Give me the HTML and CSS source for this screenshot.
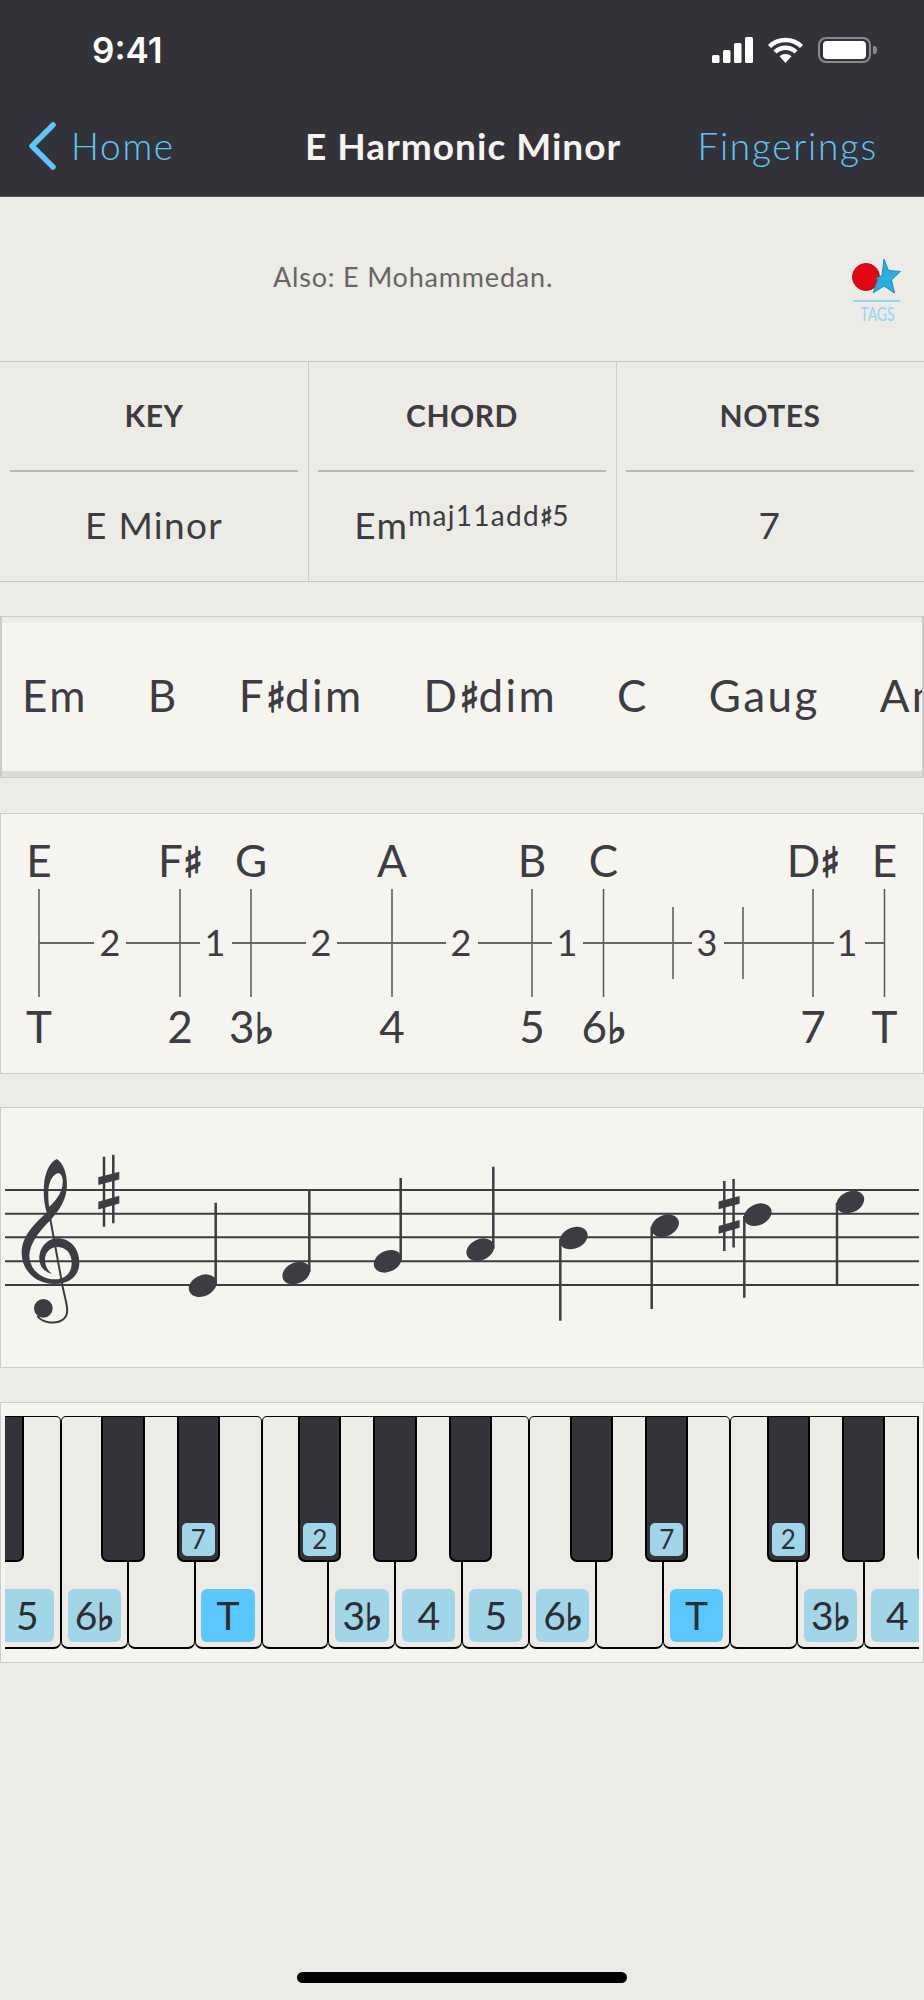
FILE: index.html
```html
<!DOCTYPE html>
<html lang="en">
<head>
  <meta charset="UTF-8">
  <title>E Harmonic Minor</title>
  <link rel="stylesheet" href="styles.css">
</head>
<body>
  <header class="topbar">
    <div class="status">
      <span class="time">9:41</span>
      <div class="status-icons">
        <svg width="42" height="26" viewBox="0 0 42 26">
          <rect class="bar" x="0" y="18" width="7.5" height="8" rx="1.5"/>
          <rect class="bar" x="11" y="13" width="7.5" height="13" rx="1.5"/>
          <rect class="bar" x="22" y="6" width="7.5" height="20" rx="1.5"/>
          <rect class="bar" x="33" y="0" width="8" height="26" rx="1.5"/>
        </svg>
        <svg class="wifi" width="37" height="26" viewBox="0 0 37 26">
          <path d="M2.5 9.5a23 23 0 0 1 32 0M8 15a15 15 0 0 1 21 0"/>
          <path class="wifi-dot" d="M18.500 26l-6-6.800a9 9 0 0 1 12 0z"/>
        </svg>
        <div class="battery"><div class="battery-fill"></div></div>
        <div class="battery-nub"></div>
      </div>
    </div>
    <nav class="navbar">
      <a class="back" href="#">
        <svg width="28" height="48" viewBox="0 0 28 48"><path d="M25 3L4 24l21 21"/></svg>
        Home
      </a>
      <h1>E Harmonic Minor</h1>
      <a class="fingerings" href="#">Fingerings</a>
    </nav>
  </header>

  <section class="alias">
    <p>Also: E Mohammedan.</p>
    <a class="tags" href="#">
      <svg width="50" height="36" viewBox="0 0 50 36">
        <circle class="tag-dot" cx="15" cy="19" r="13.500"/>
        <path class="tag-star" d="M33 1l4.500 11.500 12 1-9 8.500 3 13-10.500-7-11 7 5-13.500-2-1 6-3z"/>
      </svg>
      <span class="tags-label"><span>TAGS</span></span>
    </a>
  </section>

  <section class="facts">
    <div class="fact">
      <h2>KEY</h2>
      <p>E Minor</p>
    </div>
    <div class="fact">
      <h2>CHORD</h2>
      <p>Em<sup>maj11add<span class="acc">♯</span>5</sup></p>
    </div>
    <div class="fact">
      <h2>NOTES</h2>
      <p>7</p>
    </div>
  </section>

  <section class="chords">
    <span>Em</span>
    <span>B</span>
    <span>F<span class="acc">♯</span>dim</span>
    <span>D<span class="acc">♯</span>dim</span>
    <span>C</span>
    <span>Gaug</span>
    <span>Am</span>
  </section>

  <section class="panel panel-scale">
    <svg class="diagram" width="922" height="258" viewBox="1 814 922 258">
      <g class="note-names">
        <text x="39" y="877">E</text>
        <text x="180" y="877">F<tspan class="acc">♯</tspan></text>
        <text x="251" y="877">G</text>
        <text x="392" y="877">A</text>
        <text x="532" y="877">B</text>
        <text x="603.500" y="877">C</text>
        <text x="813" y="877">D<tspan class="acc">♯</tspan></text>
        <text x="884.500" y="877">E</text>
      </g>
      <g class="ticks">
        <path d="M39 889v108M180 889v108M251 889v108M392 889v108M532 889v108M603.500 889v108M813 889v108M884.500 889v108"/>
        <path d="M673 907v72M743 907v72"/>
      </g>
      <path class="steps" d="M39 943h55M126 943h74M232 943h74M337 943h109M478 943h74M583 943h109M724 943h110M865 943h19.500"/>
      <g class="step-sizes">
        <text x="110" y="956">2</text>
        <text x="215" y="956">1</text>
        <text x="321" y="956">2</text>
        <text x="461" y="956">2</text>
        <text x="567" y="956">1</text>
        <text x="707" y="956">3</text>
        <text x="847" y="956">1</text>
      </g>
      <g class="note-names">
        <text x="39" y="1043">T</text>
        <text x="180" y="1043">2</text>
        <text x="251" y="1043">3<tspan class="acc">♭</tspan></text>
        <text x="392" y="1043">4</text>
        <text x="532" y="1043">5</text>
        <text x="603.500" y="1043">6<tspan class="acc">♭</tspan></text>
        <text x="813" y="1043">7</text>
        <text x="884.500" y="1043">T</text>
      </g>
    </svg>
  </section>

  <section class="panel">
    <svg class="staff" width="922" height="258" viewBox="1 1108 922 258">
      <defs>
        <g id="sharp">
          <path class="stem" d="M104 1156.700v70M113.300 1154.700v68.600"/>
          <path d="M98.300 1177.300l21-5.600v7.700l-21 5.600zM98.300 1201.700l21-6v7.700l-21 6z"/>
        </g>
      </defs>
      <path class="lines" d="M5 1190h914M5 1213.700h914M5 1237.300h914M5 1261.300h914M5 1285h914"/>

      <!-- treble clef, traced at 3x -->
      <g transform="translate(0 1100) scale(.3333)">
        <path fill-rule="evenodd" d="M170 177C193 190 204 232 200 268C196 312 165 345 150 362C118 392 90 430 88 465C88 510 125 538 165 538C200 538 215 515 215 488C215 458 195 441 172 441C150 441 135 458 135 478C135 500 145 515 157 522C135 517 118 500 118 476C118 440 145 415 172 415C210 415 238 445 238 488C238 530 205 552 165 552C105 552 65 510 65 458C65 405 110 365 140 338C132 310 130 285 132 255C134 220 150 185 170 177ZM148 320C175 295 190 270 188 240C187 225 180 218 172 220C155 225 143 255 145 285C145 300 146 310 148 320Z"/>
        <path class="clef-tail" d="M146 330L188 560C198 610 212 640 190 658C170 674 128 670 112 648"/>
        <circle cx="130" cy="625" r="28"/>
      </g>

      <use href="#sharp"/>
      <use href="#sharp" transform="translate(620.300 24.300)"/>

      <g class="notes">
        <path class="stem" d="M215.700 1202.700v82M309.300 1190v82M400.700 1178v82M493.300 1166.700v82M560.300 1239v81.700M651.700 1227v82M744.300 1216v81.700M837 1203v82"/>
        <ellipse cx="202.700" cy="1285.700" rx="14.500" ry="10.500" transform="rotate(-25 202.700 1285.700)"/>
        <ellipse cx="296.300" cy="1273" rx="14.500" ry="10.500" transform="rotate(-25 296.300 1273)"/>
        <ellipse cx="387.700" cy="1261.300" rx="14.500" ry="10.500" transform="rotate(-25 387.700 1261.300)"/>
        <ellipse cx="480.300" cy="1249.700" rx="14.500" ry="10.500" transform="rotate(-25 480.300 1249.700)"/>
        <ellipse cx="573.700" cy="1238" rx="14.500" ry="10.500" transform="rotate(-25 573.700 1238)"/>
        <ellipse cx="665" cy="1225.700" rx="14.500" ry="10.500" transform="rotate(-25 665 1225.700)"/>
        <ellipse cx="757.700" cy="1214.700" rx="14.500" ry="10.500" transform="rotate(-25 757.700 1214.700)"/>
        <ellipse cx="850.300" cy="1202" rx="14.500" ry="10.500" transform="rotate(-25 850.300 1202)"/>
      </g>
    </svg>
  </section>

  <section class="panel keyboard">
    <div class="piano">
      <div class="keys">
        <div class="key"><div class="black b-e"></div><span class="mark">5</span></div>
        <div class="key"><span class="mark">6<span class="acc">♭</span></span></div>
        <div class="key"><div class="black b-a"></div></div>
        <div class="key"><div class="black b-b"><span class="mark-sm">7</span></div><span class="mark root">T</span></div>
        <div class="key"></div>
        <div class="key"><div class="black b-c"><span class="mark-sm">2</span></div><span class="mark">3<span class="acc">♭</span></span></div>
        <div class="key"><div class="black b-d"></div><span class="mark">4</span></div>
        <div class="key"><div class="black b-e"></div><span class="mark">5</span></div>
        <div class="key"><span class="mark">6<span class="acc">♭</span></span></div>
        <div class="key"><div class="black b-a"></div></div>
        <div class="key"><div class="black b-b"><span class="mark-sm">7</span></div><span class="mark root">T</span></div>
        <div class="key"></div>
        <div class="key"><div class="black b-c"><span class="mark-sm">2</span></div><span class="mark">3<span class="acc">♭</span></span></div>
        <div class="key"><div class="black b-d"></div><span class="mark">4</span></div>
        <div class="key"><div class="black b-e"></div></div>
      </div>
    </div>
  </section>

  <div class="home-indicator"></div>
</body>
</html>
```

FILE: styles.css
```css
* {
  margin: 0;
  padding: 0;
  box-sizing: border-box;
}

body {
  min-height: 2000px;
  display: flex;
  flex-direction: column;
  background-color: #ecebe6;
  color: #3c3c42;
  font-family: Lato, "DejaVu Sans", sans-serif;
}

a {
  text-decoration: none;
}

/* sharps and flats: DejaVu has them, thickened to match the heavy glyphs */
.acc {
  font-family: "DejaVu Sans", sans-serif;
  font-size: .95em;
  letter-spacing: -.03em;
  -webkit-text-stroke: .035em currentColor;
}

tspan.acc {
  stroke: #3c3c42;
  stroke-width: 1.5px;
}

/* Top bar */
.topbar {
  height: 197px;
  background-color: #333238;
  border-bottom: 1px solid #55555a;
}

.status {
  height: 98px;
  padding: 37px 47px 0 92px;
  display: flex;
  justify-content: space-between;
  align-items: flex-start;
}

.time {
  color: #fff;
  font-family: Inter, sans-serif;
  font-size: 35px;
  font-weight: 600;
  line-height: 26px;
}

.status-icons {
  display: flex;
  align-items: center;
  height: 26px;
}

.bar {
  fill: #fff;
}

.wifi {
  margin-left: 13px;
  fill: none;
  stroke: #fff;
  stroke-width: 4.500;
}

.wifi-dot {
  fill: #fff;
  stroke: none;
}

.battery {
  width: 53px;
  height: 26px;
  margin-left: 14px;
  padding: 2px 3px;
  border: 2px solid #8a8a8c;
  border-radius: 8px;
}

.battery-fill {
  height: 100%;
  background-color: #fff;
  border-radius: 4px;
}

.battery-nub {
  width: 4px;
  height: 8px;
  margin-left: 2px;
  background-color: #8a8a8c;
  border-radius: 0 3px 3px 0;
}

.navbar {
  height: 96px;
  padding: 0 46px 0 28px;
  display: grid;
  grid-template-columns: 277px auto 1fr;
  align-items: center;
}

.navbar a {
  color: #5ac8fa;
  font-size: 37px;
  font-weight: 300;
  line-height: 48px;
  letter-spacing: 1.700px;
}

.back {
  display: flex;
  align-items: center;
  gap: 15px;
}

.back svg {
  fill: none;
  stroke: #5ac8fa;
  stroke-width: 5.500;
  stroke-linecap: round;
  stroke-linejoin: round;
}

.navbar h1 {
  color: #f5f4ef;
  font-size: 37px;
  font-weight: 700;
  line-height: 48px;
  letter-spacing: 1px;
}

.fingerings {
  justify-self: end;
}

/* Alias row */
.alias {
  height: 164px;
  padding: 64px 23px 0 273px;
  display: flex;
  justify-content: space-between;
  align-items: flex-start;
}

.alias p {
  color: #666;
  font-size: 27px;
  line-height: 32px;
  letter-spacing: .800px;
}

.tags {
  width: 50px;
  margin-top: -3px;
  display: flex;
  flex-direction: column;
  align-items: center;
}

.tag-dot {
  fill: #e30613;
  stroke: #b5101a;
}

.tag-star {
  fill: #2aaee0;
  stroke: #1e8fc0;
}

.tags-label {
  width: 47px;
  margin-top: 6px;
  padding-top: 1px;
  border-top: 2px solid #8fd6f7;
  color: #8fd6f7;
  font-size: 20px;
  line-height: 20px;
  text-align: center;
}

.tags-label span {
  display: inline-block;
  transform: scaleX(.7);
}

/* Key / chord / notes table */
.facts {
  height: 221px;
  display: grid;
  grid-template-columns: 308px 308px 308px;
  border-top: 1px solid #c8c7c1;
  border-bottom: 1px solid #c8c7c1;
}

.fact {
  padding: 0 10px;
  text-align: center;
}

.fact + .fact {
  padding-left: 9px;
  border-left: 1px solid #cfcec8;
}

.fact h2 {
  height: 110px;
  border-bottom: 2px solid #b8b7b1;
  padding-top: 34px;
  font-size: 30px;
  font-weight: 700;
  line-height: 38px;
  letter-spacing: .500px;
}

.fact p {
  padding-top: 29px;
  font-size: 37px;
  line-height: 48px;
  letter-spacing: 1.300px;
}

.fact sup {
  font-size: 28px;
  line-height: 0;
}

/* Chord strip */
.chords {
  height: 162px;
  margin-top: 34px;
  padding: 0 0 4px 20px;
  display: flex;
  align-items: center;
  gap: 60px;
  overflow: hidden;
  white-space: nowrap;
  background-color: #f5f4ef;
  border: 1px solid #cdccc6;
  border-width: 1px 2px;
  font-size: 44px;
  letter-spacing: 2.400px;
  box-shadow: inset 0 6px 0 #ecebe6, inset 0 -6px 0 #dcdbd6;
}

/* Boxed panels */
.panel {
  height: 261px;
  margin-top: 33px;
  background-color: #f5f4ef;
  border: 1px solid #cdccc6;
}

.panel-scale {
  margin-top: 35px;
}

.diagram,
.staff {
  display: block;
  fill: #3c3c42;
}

.note-names text {
  font-size: 44px;
  text-anchor: middle;
}

.step-sizes text {
  font-size: 36px;
  text-anchor: middle;
}

.ticks {
  fill: none;
  stroke: #55555a;
  stroke-width: 1.500;
}

.steps {
  fill: none;
  stroke: #66666a;
  stroke-width: 2;
}

.lines {
  fill: none;
  stroke: #3c3c42;
  stroke-width: 2;
}

.stem {
  fill: none;
  stroke: #3c3c42;
  stroke-width: 2.500;
}

.clef-tail {
  fill: none;
  stroke: #3c3c42;
  stroke-width: 6;
}

/* Keyboard */
.keyboard {
  margin-top: 34px;
  padding: 13px 4px 0;
}

.piano {
  width: 914px;
  height: 233px;
  overflow: hidden;
}

.keys {
  display: flex;
  margin-left: -11.250px;
}

.key {
  flex: 0 0 66.950px;
  min-width: 0;
  height: 233px;
  padding-bottom: 5px;
  position: relative;
  display: flex;
  align-items: flex-end;
  justify-content: center;
  background-color: #ecebe6;
  border: 1.250px solid #000;
  border-bottom-width: 2px;
  border-radius: 5px 5px 7px 7px;
}

.black {
  width: 43.300px;
  height: 146px;
  padding: 0 4.500px 4.500px;
  position: absolute;
  top: -1px;
  z-index: 1;
  display: flex;
  align-items: flex-end;
  justify-content: center;
  background-color: #34333a;
  border: 2px solid #000;
  border-top-width: 1px;
  border-radius: 0 0 7px 7px;
}

.b-a { left: -27.250px; }
.b-b { left: -18.950px; }
.b-c { left: -31.250px; }
.b-d { left: -23.050px; }
.b-e { left: -14.450px; }

.mark {
  flex: none;
  width: 53.300px;
  height: 53.300px;
  background-color: #a1d5e8;
  border-radius: 6px;
  color: #2e2e32;
  font-size: 39px;
  line-height: 53px;
  text-align: center;
}

.mark.root {
  background-color: #5ac8ff;
}

.mark-sm {
  flex: none;
  width: 33px;
  height: 33px;
  background-color: #a1d5e8;
  border-radius: 5px;
  color: #2e2e32;
  font-size: 26px;
  line-height: 33px;
  text-align: center;
}

/* Home indicator */
.home-indicator {
  width: 330px;
  height: 11px;
  margin: auto auto 17px;
  background-color: #000;
  border-radius: 6px;
}
```
